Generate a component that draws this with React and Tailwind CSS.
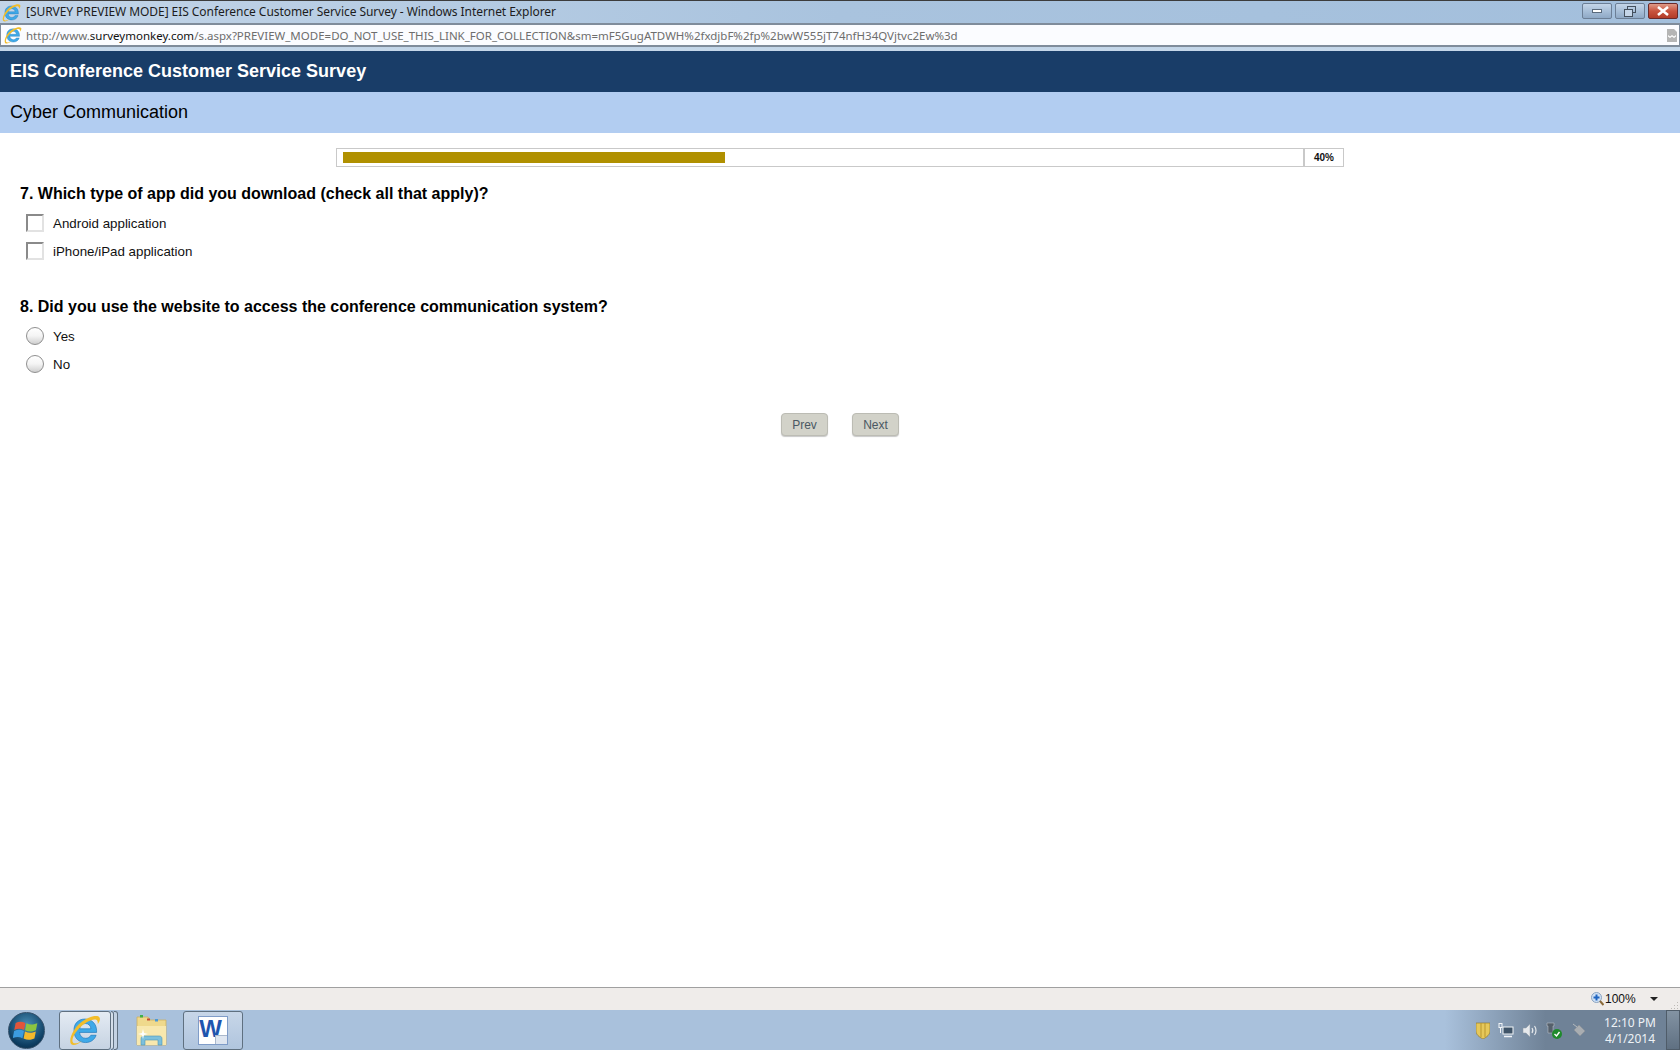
import React from "react";

const IeLogo = ({ size = 18 }) => (
  <svg width={size} height={size} viewBox="0 0 32 32" className="shrink-0">
    <g transform="translate(16 16) scale(1.22) translate(-16 -16)">
      <path d="M16 7c5.500 0 9.500 4 9.500 9.500v1.500H11.500c.4 3 2.400 4.800 5 4.800 2 0 3.500-.9 4.300-2.500h4.300c-1.200 3.700-4.500 6-8.700 6-5.500 0-9.400-3.900-9.400-9.400C6.500 11 10.400 7 16 7zm-4.400 8h9.300c-.3-2.700-2.100-4.300-4.600-4.300s-4.300 1.600-4.700 4.300z" fill="#3fa9e8" stroke="#1670b5" strokeWidth="0.5" />
    </g>
    <path d="M2 30C-1 26 5 11 17 5c6.500-3.300 12-3.800 13.500-1.500 1 1.600.2 4-1.800 6.800.3-2.300-.1-3.900-1.400-4.600C24 4.200 16 8 9.500 15 4.500 20.500 2.200 26 4 28.500c1.500 1.600 5 .9 9-1.500-4.500 3.800-9 5-11 3z" fill="#f2bd2a" />
  </svg>
);

const WinOrb = () => (
  <div className="w-[37px] h-[37px] rounded-full bg-[radial-gradient(circle_at_50%_35%,#4a90b8,#0e3f63_68%,#06243a)] border border-[#35506a] flex items-center justify-center">
    <svg width="27" height="26" viewBox="0 0 24 24">
      <path d="M2 5.500c3-1.500 5.500-1.500 9 0l-1.300 6.500c-3-1.500-5.500-1.500-9 0z" fill="#e2553a" />
      <path d="M12 5.800c3 1.500 5.500 1.500 10 0l-1.300 6.500c-4 1.500-6.500 1.500-10 0z" fill="#8cc540" />
      <path d="M.6 13c3.500-1.500 6-1.500 9 0l-1.300 6.500c-3-1.500-5.500-1.500-9 0z" fill="#3c9ce0" />
      <path d="M10.600 13.300c3.500 1.500 6 1.500 10 0l-1.300 6.500c-4 1.500-6.500 1.500-10 0z" fill="#f5b92c" />
    </svg>
  </div>
);

const FolderIcon = () => (
  <svg width="33" height="32" viewBox="0 0 33 32">
    <path d="M2 3h11l2 3h16v25H2z" fill="#efd98c" stroke="#cdb060" strokeWidth="0.8" />
    <rect x="5" y="1" width="3" height="2.500" fill="#3fb04a" />
    <rect x="12" y="4.500" width="3" height="2" fill="#c84a30" />
    <rect x="20" y="5" width="3" height="2.500" fill="#4a9ad8" />
    <path d="M2 12h29v19H2z" fill="#f8e8ae" />
    <path d="M6 31v-6c0-2 1-3 3-3h15c2 0 3 1 3 3v6h-4v-5H10v5z" fill="#7cc0dc" stroke="#4a94b8" strokeWidth="0.6" />
    <path d="M8 15l1 4 4 1-4 1-1 4-1-4-4-1 4-1z" fill="#ffffff" />
  </svg>
);

const WordIcon = () => (
  <div className="relative w-[30px] h-[29px] bg-white border border-[#7f9cc8] flex items-start justify-center overflow-hidden">
    <span className="font-['Liberation_Sans',sans-serif] font-bold text-[24px] leading-[21px] mt-[1px] -ml-[5px] text-[#1f55ae]">W</span>
    <div className="absolute right-0 bottom-0 w-[12px] h-[9px] bg-[#dfe6f0] border-l border-t border-[#aab8cc]" />
  </div>
);

const WinButton = ({ className, children }) => (
  <div className={`h-[16px] rounded-[2px] border flex items-center justify-center ${className}`}>
    {children}
  </div>
);

const Checkbox = () => (
  <div className="w-[18px] h-[18px] shrink-0 bg-white border-2 border-t-[#8a8a8a] border-l-[#8a8a8a] border-r-[#e2e2e2] border-b-[#e2e2e2]" />
);

const Radio = () => (
  <div className="w-[18px] h-[18px] shrink-0 rounded-full border border-[#8f8f8f] bg-[linear-gradient(to_bottom,#ffffff,#f4f4f4_50%,#cfcfcf)]" />
);

const Option = ({ control, label }) => (
  <div className="h-[28px] pl-[26px] flex items-center gap-[9px]">
    {control}
    <span className="pt-[1px] text-[13.33px] text-[#111111]">{label}</span>
  </div>
);

const NavButton = ({ label }) => (
  <button className="w-[47px] h-[23px] rounded-[4px] bg-[#d2d2c9] border border-[#bcbcb4] shadow-[0_1px_1px_#c8c8c8] text-[12px] text-[#4a5863]">
    {label}
  </button>
);

const App = () => {
  return (
    <div className="w-[1680px] h-[1050px] overflow-hidden flex flex-col bg-white font-['Liberation_Sans',sans-serif]">
      {/* title bar */}
      <div className="h-[23px] shrink-0 border-t border-[#3c3c3c] bg-[linear-gradient(to_right,#c3d5e8,#a9c3de_50%,#a3bfdc)] flex items-center pl-[2px] pr-[2px]">
        <IeLogo size={19} />
        <span className="ml-[5px] font-['Noto_Sans',sans-serif] text-[12px] tracking-[-0.06px] text-[#1c1c1c] whitespace-nowrap">
          [SURVEY PREVIEW MODE] EIS Conference Customer Service Survey - Windows Internet Explorer
        </span>
        <div className="ml-auto mb-[2px] flex gap-[3px] items-start">
          <WinButton className="w-[30px] border-[#6c7f96] bg-[linear-gradient(to_bottom,#c4d5e8,#a8bfd8_50%,#8fa9c6)]">
            <div className="w-[10px] h-[4px] bg-white border border-[#5a6a7c]" />
          </WinButton>
          <WinButton className="w-[30px] border-[#6c7f96] bg-[linear-gradient(to_bottom,#c4d5e8,#a8bfd8_50%,#8fa9c6)]">
            <svg width="12" height="11" viewBox="0 0 12 11">
              <rect x="3.500" y="0.500" width="8" height="6" fill="none" stroke="#44505e" />
              <rect x="0.500" y="3.500" width="8" height="7" fill="#c4d5e8" stroke="#44505e" />
            </svg>
          </WinButton>
          <WinButton className="w-[30px] border-[#6a2a2a] bg-[linear-gradient(to_bottom,#dd9a88,#c9543e_50%,#b23c28)]">
            <svg width="12" height="10" viewBox="0 0 12 10">
              <path d="M1 1l10 8M11 1L1 9" stroke="#ffffff" strokeWidth="2.600" />
            </svg>
          </WinButton>
        </div>
      </div>

      {/* address bar */}
      <div className="h-[28px] shrink-0 bg-[linear-gradient(to_bottom,#a9c3de,#c6d8ea)] pb-[4px]">
        <div className="h-[24px] bg-[#fbfcff] border-y-2 border-x border-[#7f8c9b] flex items-center pl-[3px] pr-[2px]">
          <IeLogo size={18} />
          <span className="ml-[4px] pt-[2px] font-['Noto_Sans',sans-serif] text-[11.5px] text-[#6d6d6d] whitespace-nowrap">
            http://www.<span className="text-[#111111]">surveymonkey.com</span>/s.aspx?PREVIEW_MODE=DO_NOT_USE_THIS_LINK_FOR_COLLECTION&amp;sm=mF5GugATDWH%2fxdjbF%2fp%2bwW555jT74nfH34QVjtvc2Ew%3d
          </span>
          <svg width="10" height="13" viewBox="0 0 10 13" className="ml-auto">
            <path d="M0 0h7l3 3v10H0z" fill="#b5b5b5" />
            <path d="M1 6l2 1.500 2-1.500 2 1.500 2-1.500v1.500l-2 1.500-2-1.500-2 1.500-2-1.500z" fill="#ffffff" />
          </svg>
        </div>
      </div>

      {/* survey header */}
      <div className="h-[41px] shrink-0 bg-[#193d68] flex items-center pl-[10px]">
        <span className="text-[18px] font-bold text-white">EIS Conference Customer Service Survey</span>
      </div>
      <div className="h-[41px] shrink-0 bg-[#b2cdf1] flex items-center pl-[10px]">
        <span className="text-[18px] text-black">Cyber Communication</span>
      </div>

      {/* survey body */}
      <div className="flex-1 min-h-0">
        <div className="mt-[15px] ml-[336px] w-[1008px] h-[19px] border border-[#c9c9c9] flex">
          <div className="w-[968px] border-r-2 border-[#c9c9c9] py-[3px] pl-[6px]">
            <div className="w-[382px] h-[11px] bg-[#b09000]" />
          </div>
          <div className="flex-1 flex items-center justify-center text-[10px] font-bold text-[#111111]">40%</div>
        </div>

        <div className="mt-[16px] pl-[20px] h-[22px] flex items-center text-[16px] font-bold text-black">
          7. Which type of app did you download (check all that apply)?
        </div>
        <div className="mt-[4px]">
          <Option control={<Checkbox />} label="Android application" />
          <Option control={<Checkbox />} label="iPhone/iPad application" />
        </div>

        <div className="mt-[31px] pl-[20px] h-[22px] flex items-center text-[16px] font-bold text-black">
          8. Did you use the website to access the conference communication system?
        </div>
        <div className="mt-[4px]">
          <Option control={<Radio />} label="Yes" />
          <Option control={<Radio />} label="No" />
        </div>

        <div className="mt-[35px] flex justify-center gap-[24px]">
          <NavButton label="Prev" />
          <NavButton label="Next" />
        </div>
      </div>

      {/* status bar */}
      <div className="h-[23px] shrink-0 border-t border-[#a0a0a0] bg-[#efecea] flex items-center pl-[1591px]">
        <svg width="13" height="14" viewBox="0 0 13 14">
          <circle cx="5.500" cy="5.500" r="5" fill="#cfe0f5" stroke="#8aa3c0" />
          <path d="M5.500 2.500v6M2.500 5.500h6" stroke="#1f64c0" strokeWidth="2" />
          <path d="M9 9l3.500 4" stroke="#8a6a3a" strokeWidth="2" />
        </svg>
        <span className="ml-[1px] text-[12px] text-[#111111]">100%</span>
        <div className="ml-[14px] w-0 h-0 border-x-[4px] border-x-transparent border-t-[4px] border-t-[#222222]" />
        <svg width="9" height="9" viewBox="0 0 9 9" className="ml-[12px] mt-[12px]">
          <path d="M7 1h1v1H7zM4 4h1v1H4zM7 4h1v1H7zM1 7h1v1H1zM4 7h1v1H4zM7 7h1v1H7z" fill="#bdbab6" />
        </svg>
      </div>

      {/* taskbar */}
      <div className="h-[40px] shrink-0 bg-[linear-gradient(to_right,#a9c1dc_0%,#a9c1dc_86%,#6f8297_92%,#6f8297_100%)] flex items-center pl-[8px]">
        <WinOrb />
        <div className="ml-[14px] w-[52px] h-[39px] rounded-[3px] border border-[#5f7080] bg-[linear-gradient(to_bottom,#e4ebf3,#c6d3e2)] flex items-center justify-center">
          <IeLogo size={32} />
        </div>
        <div className="w-[3px] h-[39px] rounded-r-[3px] border border-l-0 border-[#5f7080] bg-[#d3deea]" />
        <div className="w-[4px] h-[39px] rounded-r-[3px] border border-l-0 border-[#5f7080] bg-[#c3d2e3]" />
        <div className="ml-[17px] w-[33px] flex items-center justify-center">
          <FolderIcon />
        </div>
        <div className="ml-[15px] w-[60px] h-[39px] rounded-[3px] border border-[#5f7080] bg-[linear-gradient(to_bottom,#c7d6e8,#b0c5de)] flex items-center justify-center">
          <WordIcon />
        </div>

        {/* tray */}
        <div className="ml-auto flex items-center">
          <svg width="14" height="17" viewBox="0 0 14 17">
            <path d="M0 1h14v8c0 3.500-3 6-7 8-4-2-7-4.500-7-8z" fill="#e6c85a" stroke="#8a7020" strokeWidth="0.6" />
            <path d="M5 1v14M9 1v14" stroke="#b8962e" />
          </svg>
          <svg width="16" height="15" viewBox="0 0 16 15" className="ml-[8px]">
            <rect x="5" y="4" width="10" height="7" fill="#3f5468" stroke="#f2f5f8" />
            <path d="M6 13.500h8" stroke="#f2f5f8" strokeWidth="1.500" />
            <rect x="1" y="0.500" width="3" height="4" fill="none" stroke="#f2f5f8" />
            <path d="M2.500 5v5" stroke="#f2f5f8" />
          </svg>
          <svg width="16" height="15" viewBox="0 0 16 15" className="ml-[8px]">
            <path d="M1 5h3l4-4v13l-4-4H1z" fill="#e6e9ec" stroke="#8d98a4" strokeWidth="0.5" />
            <path d="M10 5c1 1.500 1 3.500 0 5M12.500 3c2 2.500 2 6.500 0 9" fill="none" stroke="#e6e9ec" strokeWidth="1.200" />
          </svg>
          <svg width="17" height="17" viewBox="0 0 17 17" className="ml-[8px]">
            <path d="M1 1h7v3h-1v7H2V4H1z" fill="#55606b" stroke="#c4cad0" strokeWidth="0.5" />
            <circle cx="11" cy="12" r="5" fill="#1f8a2c" />
            <path d="M8.500 12l2 2 3-4" fill="none" stroke="#ffffff" strokeWidth="1.400" />
          </svg>
          <svg width="14" height="14" viewBox="0 0 14 14" className="ml-[9px]">
            <path d="M7 2l6 6-5 5-6-6z" fill="#a9adb1" stroke="#8a8f94" strokeWidth="0.5" />
            <path d="M1 1l4 3" stroke="#b5b9bd" />
          </svg>
          <div className="ml-[14px] pt-[2px] w-[60px] flex flex-col items-center text-[12px] leading-[16px] text-[#eef2f6] font-['Noto_Sans',sans-serif]">
            <span>12:10 PM</span>
            <span>4/1/2014</span>
          </div>
          <div className="ml-[6px] w-[14px] h-[40px] border border-[#4f5c69] bg-[linear-gradient(to_bottom,#8393a3,#5f7082)]" />
        </div>
      </div>
    </div>
  );
};

export default App;
